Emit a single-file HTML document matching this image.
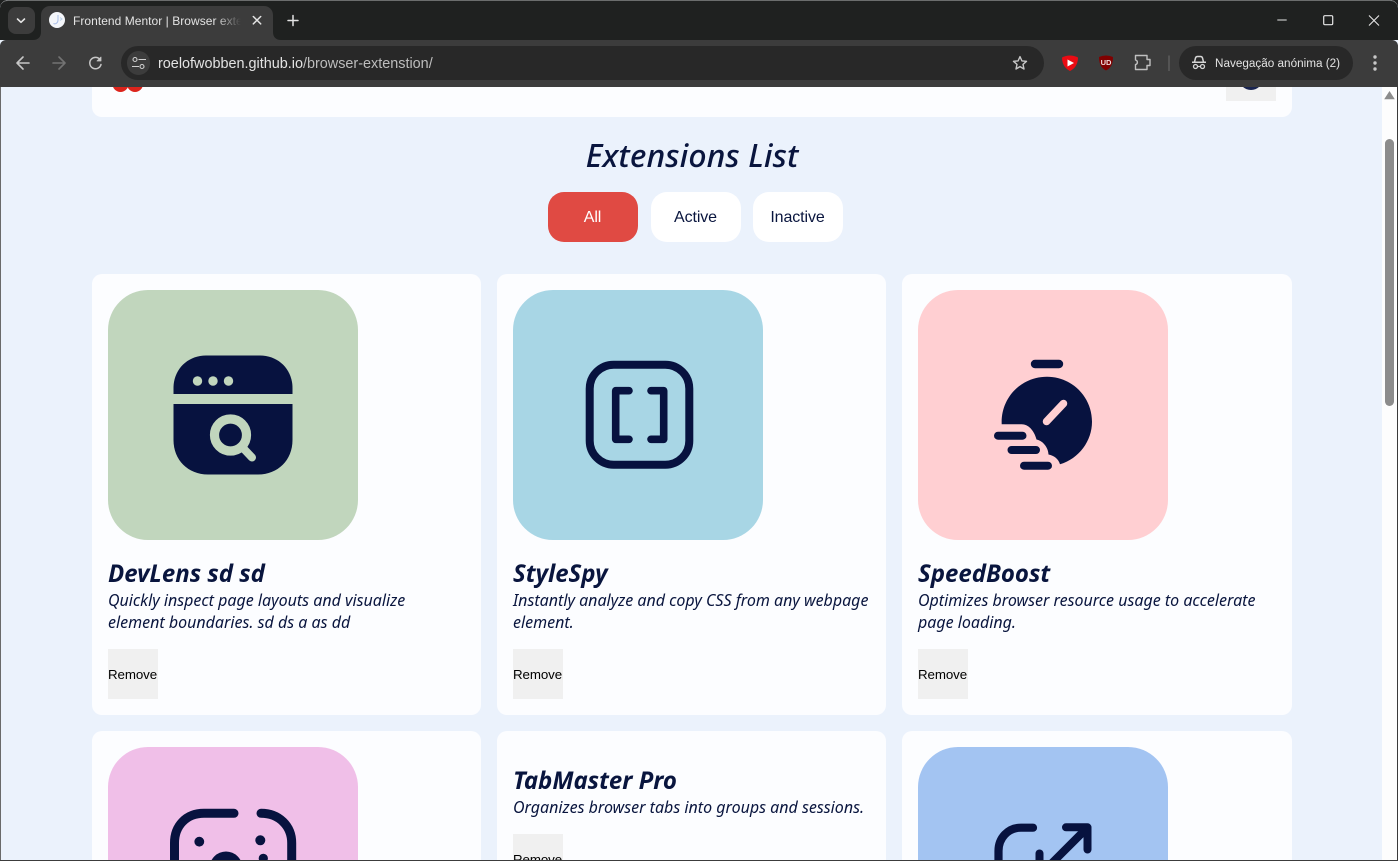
<!DOCTYPE html>
<html lang="pt">
<head>
<meta charset="utf-8">
<title>Frontend Mentor | Browser extension</title>
<style>
html,body{margin:0;padding:0;width:1398px;height:861px;overflow:hidden;background:#1f2120}
*{box-sizing:border-box}
.a{position:absolute}
#win{position:absolute;left:0;top:0;width:1398px;height:861px;overflow:hidden;border-radius:8px 8px 0 0;background:#ebf2fc}
#page{position:absolute;left:1px;top:87px;width:1396px;height:773px;overflow:hidden;background:#ebf2fc}
.t{position:absolute;white-space:nowrap;line-height:1}
.card{position:absolute;background:#fcfdff;border-radius:10px}
.img{position:absolute;width:250px;height:250px;border-radius:40px}
.h{position:absolute;white-space:nowrap;font:italic 700 24px/30px "Noto Sans","Open Sans","Noto Sans CJK JP",sans-serif;color:#09153e}
.p{position:absolute;white-space:nowrap;font:italic 400 16px/22px "Noto Sans","Open Sans","Noto Sans CJK JP",sans-serif;color:#09153e}
.rm{position:absolute;width:50px;height:50px;overflow:hidden;background:#f0f0f0;font:13.33px/51px "Liberation Sans",Arial,sans-serif;letter-spacing:-.1px;color:#000;text-align:center;white-space:nowrap;padding-right:1px}
.f{position:absolute;top:192px;width:90px;height:50px;border-radius:16px;background:#fff;font:16px/51px "Liberation Sans",Arial,sans-serif;letter-spacing:-.1px;color:#09153e;text-align:center;padding-right:1px}
svg{position:absolute;display:block}
</style>
</head>
<body>
<div id="win">

<div id="page">
<div style="position:absolute;left:-1px;top:-87px;width:1398px;height:861px">
  <!-- header card -->
  <div class="card" style="left:92px;top:87px;width:1200px;height:30px;border-radius:0 0 10px 10px"></div>
  <svg style="left:0;top:0" width="1398" height="861">
    <circle cx="120.500" cy="84" r="8" fill="#dc241c"/><circle cx="135" cy="84" r="8" fill="#dc241c"/>
  </svg>
  <div class="a" style="left:1226px;top:87px;width:50px;height:14px;background:#f0f0f0"></div>
  <svg style="left:0;top:0" width="1398" height="861"><circle cx="1251" cy="78" r="12" fill="#1a2550"/></svg>

  <div class="t" id="h1" style="left:492px;width:400px;text-align:center;top:137px;font:italic 500 32px/38px 'Noto Sans','Open Sans','Noto Sans CJK JP',sans-serif;letter-spacing:.08px;color:#09153e">Extensions List</div>

  <div class="f" style="left:548px;background:#e04a43;color:#fff">All</div>
  <div class="f" style="left:651px">Active</div>
  <div class="f" style="left:753px">Inactive</div>

  <!-- Card 1 -->
  <div class="card" style="left:92px;top:274px;width:389px;height:441px"></div>
  <div class="img" style="left:108px;top:290px;background:#c1d6bd"></div>
  <svg style="left:0;top:0" width="1398" height="861">
    <path d="M173.500 394V388C173.500 369 188 355.500 206 355.500H260C278 355.500 292.500 369 292.500 388V394Z" fill="#07123f"/>
    <path d="M173.500 404H292.500V440C292.500 460 278 474.500 258 474.500H208C188 474.500 173.500 460 173.500 440Z" fill="#07123f"/>
    <circle cx="197.500" cy="381" r="4.700" fill="#c1d6bd"/><circle cx="213" cy="381" r="4.700" fill="#c1d6bd"/><circle cx="228.500" cy="381" r="4.700" fill="#c1d6bd"/>
    <circle cx="230.500" cy="435" r="16" fill="none" stroke="#c1d6bd" stroke-width="9.200"/>
    <path d="M243 448L252 457.500" stroke="#c1d6bd" stroke-width="8" stroke-linecap="round" fill="none"/>
  </svg>
  <div class="h" style="left:108px;top:559px">DevLens sd sd</div>
  <div class="p" style="left:108px;top:589px">Quickly inspect page layouts and visualize<br>element boundaries. sd ds a as dd</div>
  <div class="rm" style="left:108px;top:649px">Remove</div>

  <!-- Card 2 -->
  <div class="card" style="left:497px;top:274px;width:389px;height:441px"></div>
  <div class="img" style="left:513px;top:290px;background:#a8d6e5"></div>
  <svg style="left:0;top:0" width="1398" height="861">
    <rect x="589.700" y="364.700" width="99.600" height="100" rx="24" fill="none" stroke="#07123f" stroke-width="8"/>
    <path d="M629 390.700H615.700V439.300H629M651 390.700H663.700V439.300H651" fill="none" stroke="#07123f" stroke-width="7.600" stroke-linecap="round" stroke-linejoin="round"/>
  </svg>
  <div class="h" style="left:513px;top:559px">StyleSpy</div>
  <div class="p" style="left:513px;top:589px">Instantly analyze and copy CSS from any webpage<br>element.</div>
  <div class="rm" style="left:513px;top:649px">Remove</div>

  <!-- Card 3 -->
  <div class="card" style="left:902px;top:274px;width:390px;height:441px"></div>
  <div class="img" style="left:918px;top:290px;background:#ffcfd2"></div>
  <svg style="left:0;top:0" width="1398" height="861">
    <path d="M1035 364H1059" stroke="#07123f" stroke-width="8.400" stroke-linecap="round" fill="none"/>
    <path d="M1001.700 424.300C1000.500 398 1021 376.700 1047 376.700C1072 376.700 1092 397 1092 421.700C1092 441 1079 458.500 1060 464.300C1058.500 459 1054 455.500 1048.500 454.500C1048.500 449 1044 441 1036.500 439.500C1034 430 1028 424.300 1021.700 424.300Z" fill="#07123f"/>
    <path d="M998 435.700H1022.500M1011.500 450H1036M1024 465.700H1048" stroke="#07123f" stroke-width="8" stroke-linecap="round" fill="none"/>
    <path d="M1046.500 421.500L1063.500 403.500" stroke="#ffcfd2" stroke-width="7.500" stroke-linecap="round" fill="none"/>
  </svg>
  <div class="h" style="left:918px;top:559px">SpeedBoost</div>
  <div class="p" style="left:918px;top:589px">Optimizes browser resource usage to accelerate<br>page loading.</div>
  <div class="rm" style="left:918px;top:649px">Remove</div>

  <!-- Row 2 -->
  <div class="card" style="left:92px;top:731px;width:389px;height:130px;border-radius:10px 10px 0 0"></div>
  <div class="img" style="left:108px;top:747px;height:114px;border-radius:40px 40px 0 0;background:#f0bfe8"></div>
  <svg style="left:0;top:0" width="1398" height="861">
    <path d="M234 813.300H204C186 813.300 174.500 826 174.500 843V870M261 813.300C279 813.300 291.700 826 291.700 843V870" fill="none" stroke="#07123f" stroke-width="9" stroke-linecap="round"/>
    <circle cx="199.300" cy="841.700" r="4.900" fill="#07123f"/><circle cx="260.300" cy="840.300" r="5" fill="#07123f"/><circle cx="263.300" cy="858.300" r="4.600" fill="#07123f"/>
    <circle cx="226" cy="868" r="16.500" fill="#07123f"/>
  </svg>

  <div class="card" style="left:497px;top:731px;width:389px;height:130px;border-radius:10px 10px 0 0"></div>
  <div class="h" style="left:513px;top:766px">TabMaster Pro</div>
  <div class="p" style="left:513px;top:796px">Organizes browser tabs into groups and sessions.</div>
  <div class="rm" style="left:513px;top:834px;height:27px">Remove</div>

  <div class="card" style="left:902px;top:731px;width:390px;height:130px;border-radius:10px 10px 0 0"></div>
  <div class="img" style="left:918px;top:747px;height:114px;border-radius:40px 40px 0 0;background:#a3c4f2"></div>
  <svg style="left:0;top:0" width="1398" height="861">
    <path d="M1033 827.700H1021C1008 827.700 998.500 838 998.500 851V870" fill="none" stroke="#07123f" stroke-width="8.200" stroke-linecap="round"/>
    <path d="M1066 827.300H1087.500V849.500" fill="none" stroke="#07123f" stroke-width="8" stroke-linecap="round" stroke-linejoin="round"/>
    <path d="M1087 828L1045 870" fill="none" stroke="#07123f" stroke-width="8"/>
    <path d="M1039.500 853.500V870" fill="none" stroke="#07123f" stroke-width="8" stroke-linecap="round"/>
  </svg>
</div>
</div>

<!-- scrollbar -->
<div class="a" style="left:1382px;top:87px;width:15px;height:773px;background:#fdfdfd"></div>
<svg style="left:0;top:0" width="1398" height="861">
  <path d="M1389.500 91L1394.800 99.200H1384.200Z" fill="#8c8c8c"/>
  <rect x="1385" y="139" width="9" height="267" rx="4.500" fill="#8c8c8c"/>
</svg>

<!-- tab strip -->
<div class="a" style="left:0;top:0;width:1398px;height:40px;background:#1f2120;border-top:1px solid #6b6d6d;border-radius:8px 8px 0 0"></div>
<div class="a" style="left:8px;top:7px;width:27px;height:27px;border-radius:8px;background:#3c3c3c"></div>
<svg style="left:0;top:0" width="60" height="40"><path d="M17.500 19L21 22.300L24.500 19" fill="none" stroke="#e3e3e3" stroke-width="1.600" stroke-linecap="round" stroke-linejoin="round"/></svg>

<div class="a" style="left:41px;top:6px;width:232px;height:35px;background:#3c3c3c;border-radius:9px 9px 0 0"></div>
<svg style="left:0;top:0" width="300" height="40">
  <path d="M33 40H41V32C41 37 38 40 33 40Z" fill="#3c3c3c"/>
  <path d="M281 40H273V32C273 37 276 40 281 40Z" fill="#3c3c3c"/>
  <circle cx="57" cy="20" r="8" fill="#f4f6fa"/>
  <path d="M58 15V20C58 23 55.500 24.500 53.500 23.500" fill="none" stroke="#a9bde8" stroke-width="1"/>
  <path d="M60 17.500L62 19L60 20.500" fill="none" stroke="#b9d0e8" stroke-width="1"/>
  <path d="M253.300 16.500L260.700 23.900M260.700 16.500L253.300 23.900" stroke="#e3e3e3" stroke-width="1.500" stroke-linecap="round"/>
  <path d="M293 15.500V25.500M288 20.500H298" stroke="#e3e3e3" stroke-width="1.500" stroke-linecap="round"/>
</svg>
<div class="t" style="left:73px;top:14px;width:168px;overflow:hidden;font:12px/14px 'Liberation Sans',sans-serif;letter-spacing:.04px;color:#e3e3e3;-webkit-mask-image:linear-gradient(90deg,#000 85%,transparent 100%);mask-image:linear-gradient(90deg,#000 85%,transparent 100%)">Frontend Mentor | Browser extension</div>

<!-- window controls -->
<svg style="left:0;top:0" width="1398" height="40">
  <path d="M1277.300 20H1286.700" stroke="#e6e6e6" stroke-width="1"/>
  <rect x="1323.700" y="15.700" width="9" height="9" rx="1.200" fill="none" stroke="#e6e6e6" stroke-width="1.200"/>
  <path d="M1369 15.500L1379 25.500M1379 15.500L1369 25.500" stroke="#e6e6e6" stroke-width="1.100"/>
</svg>

<!-- toolbar -->
<div class="a" style="left:0;top:40px;width:1398px;height:47px;background:#3c3c3c;border-radius:6px 6px 0 0"></div>
<div class="a" style="left:41px;top:40px;width:232px;height:4px;background:#3c3c3c"></div>
<div class="a" style="left:121px;top:46px;width:923px;height:34px;border-radius:17px;background:#282828"></div>
<div class="a" style="left:127px;top:51px;width:23px;height:24px;border-radius:12px;background:#3c3c3c"></div>
<svg style="left:0;top:0" width="1398" height="87">
  <path d="M29 63H17.500M23 57L17 63L23 69" fill="none" stroke="#c7c7c7" stroke-width="1.600" stroke-linecap="round" stroke-linejoin="round"/>
  <path d="M53 63H64.500M59 57L65 63L59 69" fill="none" stroke="#737373" stroke-width="1.600" stroke-linecap="round" stroke-linejoin="round"/>
  <path d="M100.300 60A5.700 5.700 0 1 0 101 64.500" fill="none" stroke="#c7c7c7" stroke-width="1.500" stroke-linecap="round"/>
  <path d="M101 57V61H97Z" fill="#c7c7c7" stroke="#c7c7c7" stroke-width=".8" stroke-linejoin="round"/>
  <circle cx="135" cy="59.500" r="2" fill="none" stroke="#d0d0d0" stroke-width="1.100"/>
  <circle cx="142" cy="66.500" r="2" fill="none" stroke="#d0d0d0" stroke-width="1.100"/>
  <path d="M138.500 59.500H146M132 66.500H139" stroke="#d0d0d0" stroke-width="1.100"/>
  <path d="M1020 56.600L1021.900 60.900L1026.500 61.300L1023 64.400L1024 69L1020 66.600L1016 69L1017 64.400L1013.500 61.300L1018.100 60.900Z" fill="none" stroke="#c7c7c7" stroke-width="1.400" stroke-linejoin="round"/>
  <path d="M1062 57.500Q1070 53.500 1078 57.500C1078 65 1074 69 1070 71C1066 69 1062 65 1062 57.500Z" fill="#ea0b13"/>
  <path d="M1067.500 59.500L1074 63L1067.500 66.500Z" fill="#fff"/>
  <path d="M1099 57Q1106 54 1113 57C1113 65 1110 68.500 1106 70.500C1102 68.500 1099 65 1099 57Z" fill="#800000"/>
  <text x="1106" y="65" text-anchor="middle" font-family="Liberation Sans" font-weight="700" font-size="7.500" fill="#f0dcdc">UD</text>
  <path d="M1135.500 55.500H1147V59.500H1150V65.500H1147V69.500H1135.500V64.500C1138 64 1138 60.500 1135.500 60Z" fill="none" stroke="#c0c0c0" stroke-width="1.400" stroke-linejoin="round"/>
  <path d="M1169 55.500V71" stroke="#5c5c5c" stroke-width="1.500"/>
  <rect x="1179" y="46" width="174" height="34" rx="17" fill="#282828"/>
  <path d="M1192 62.300H1206M1194.500 62L1195.500 58C1195.800 57 1196.500 56.500 1197.500 56.500H1200.500C1201.500 56.500 1202.200 57 1202.500 58L1203.500 62" fill="none" stroke="#d5d5d5" stroke-width="1.500"/>
  <circle cx="1195.500" cy="66.500" r="2" fill="none" stroke="#d5d5d5" stroke-width="1.300"/>
  <circle cx="1202.500" cy="66.500" r="2" fill="none" stroke="#d5d5d5" stroke-width="1.300"/>
  <path d="M1197.500 66.500H1200.500" stroke="#d5d5d5" stroke-width="1.200"/>
  <circle cx="1375" cy="57" r="1.700" fill="#c7c7c7"/><circle cx="1375" cy="63" r="1.700" fill="#c7c7c7"/><circle cx="1375" cy="69" r="1.700" fill="#c7c7c7"/>
</svg>
<div class="t" style="left:158px;top:56px;font:14.420px/16px 'Liberation Sans',sans-serif;color:#e3e3e3">roelofwobben.github.io<span style="color:#bdbdbd">/browser-extenstion/</span></div>
<div class="t" style="left:1215px;top:57px;font:11.720px/14px 'Liberation Sans',sans-serif;color:#e3e3e3">Navegação anónima (2)</div>

<!-- window edges -->
<div class="a" style="left:0;top:87px;width:1px;height:774px;background:#6a6a6a"></div>
<div class="a" style="left:1397px;top:87px;width:1px;height:774px;background:#3a3a3a"></div>
<div class="a" style="left:0;top:860px;width:1398px;height:1px;background:#3c3c3c"></div>
</div>
</body>
</html>
